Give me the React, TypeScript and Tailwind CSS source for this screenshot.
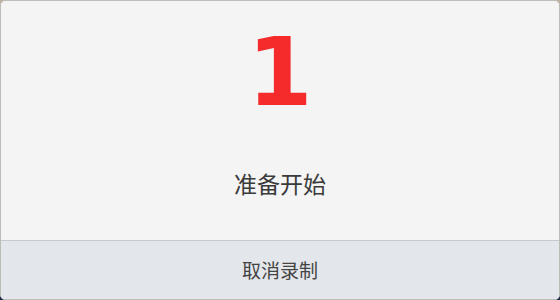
export default function App() {
  return (
    <div className="h-[300px] w-[560px] bg-gradient-to-b from-[#b9b2a0] to-[#1e2a48]">
      <div className="flex h-full w-full flex-col overflow-hidden rounded-[5px] border border-[#bdbdb8] bg-[#f4f4f4] font-['Noto_Sans_CJK_SC',sans-serif]">
        <div className="flex flex-1 flex-col items-center">
          <div className="mt-[25px] font-['DejaVu_Sans',sans-serif] text-[94px] font-bold leading-none text-[#f52a2a]">
            1
          </div>
          <div className="mt-[46px] text-[23px] text-[#3a3a3a]">准备开始</div>
        </div>
        <button className="flex h-[59px] items-center justify-center border-t border-[#c6c9ce] bg-[#e3e6ea] text-[19px] text-[#444]">
          取消录制
        </button>
      </div>
    </div>
  );
}
